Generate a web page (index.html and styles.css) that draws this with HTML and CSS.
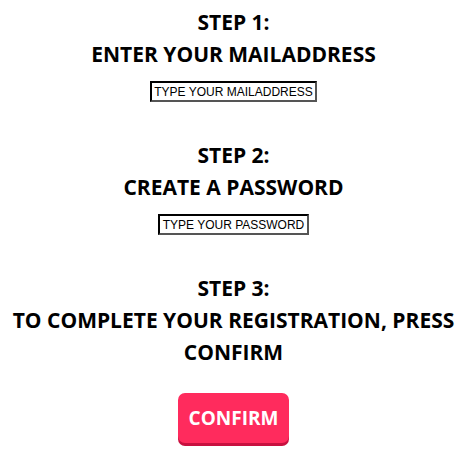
FILE: index.html
```html
<!DOCTYPE html>
<html>
<head>
<meta charset="utf-8">
<link rel="stylesheet" href="styles.css">
</head>
<body>
<main class="page">
  <section class="step">
    <h2 class="step-title">STEP 1:<br>ENTER YOUR MAILADDRESS</h2>
    <input class="field field-mail" type="text" placeholder="TYPE YOUR MAILADDRESS">
  </section>
  <section class="step">
    <h2 class="step-title">STEP 2:<br>CREATE A PASSWORD</h2>
    <input class="field field-pass" type="text" placeholder="TYPE YOUR PASSWORD">
  </section>
  <section class="step">
    <h2 class="step-title">STEP 3:<br>TO COMPLETE YOUR REGISTRATION, PRESS<br>CONFIRM</h2>
    <button class="confirm" type="button">CONFIRM</button>
  </section>
</main>
</body>
</html>
```

FILE: styles.css
```css
html, body {
  margin: 0;
  padding: 0;
  background: #fff;
}
.page {
  display: flex;
  flex-direction: column;
  align-items: center;
  padding: 6px 0 0 4px;
  font-family: "Open Sans", "Noto Sans", sans-serif;
}
.step {
  display: flex;
  flex-direction: column;
  align-items: center;
  margin-bottom: 37px;
}
.step-title {
  margin: 0 0 11px;
  font-size: 21px;
  line-height: 32px;
  font-weight: 700;
  text-align: center;
  white-space: nowrap;
  color: #000;
}
.field {
  box-sizing: border-box;
  height: 21px;
  padding: 0 2px;
  border-style: solid;
  border-width: 2px;
  border-color: #000 #555 #555 #000;
  font-family: "Liberation Sans", Arial, sans-serif;
  font-size: 12px;
  text-align: center;
  color: #000;
  background: #fff;
}
.field::placeholder {
  color: #000;
  opacity: 1;
}
.field-mail { width: 167px; }
.field-pass { width: 151px; }
.confirm {
  margin-top: 14px;
  width: 111px;
  height: 50px;
  border: none;
  border-radius: 7px;
  background: #ff2b5d;
  box-shadow: 0 3px 0 #c8103f;
  color: #fff;
  font-family: "Open Sans", "Noto Sans", sans-serif;
  font-size: 19px;
  font-weight: 700;
}
```
